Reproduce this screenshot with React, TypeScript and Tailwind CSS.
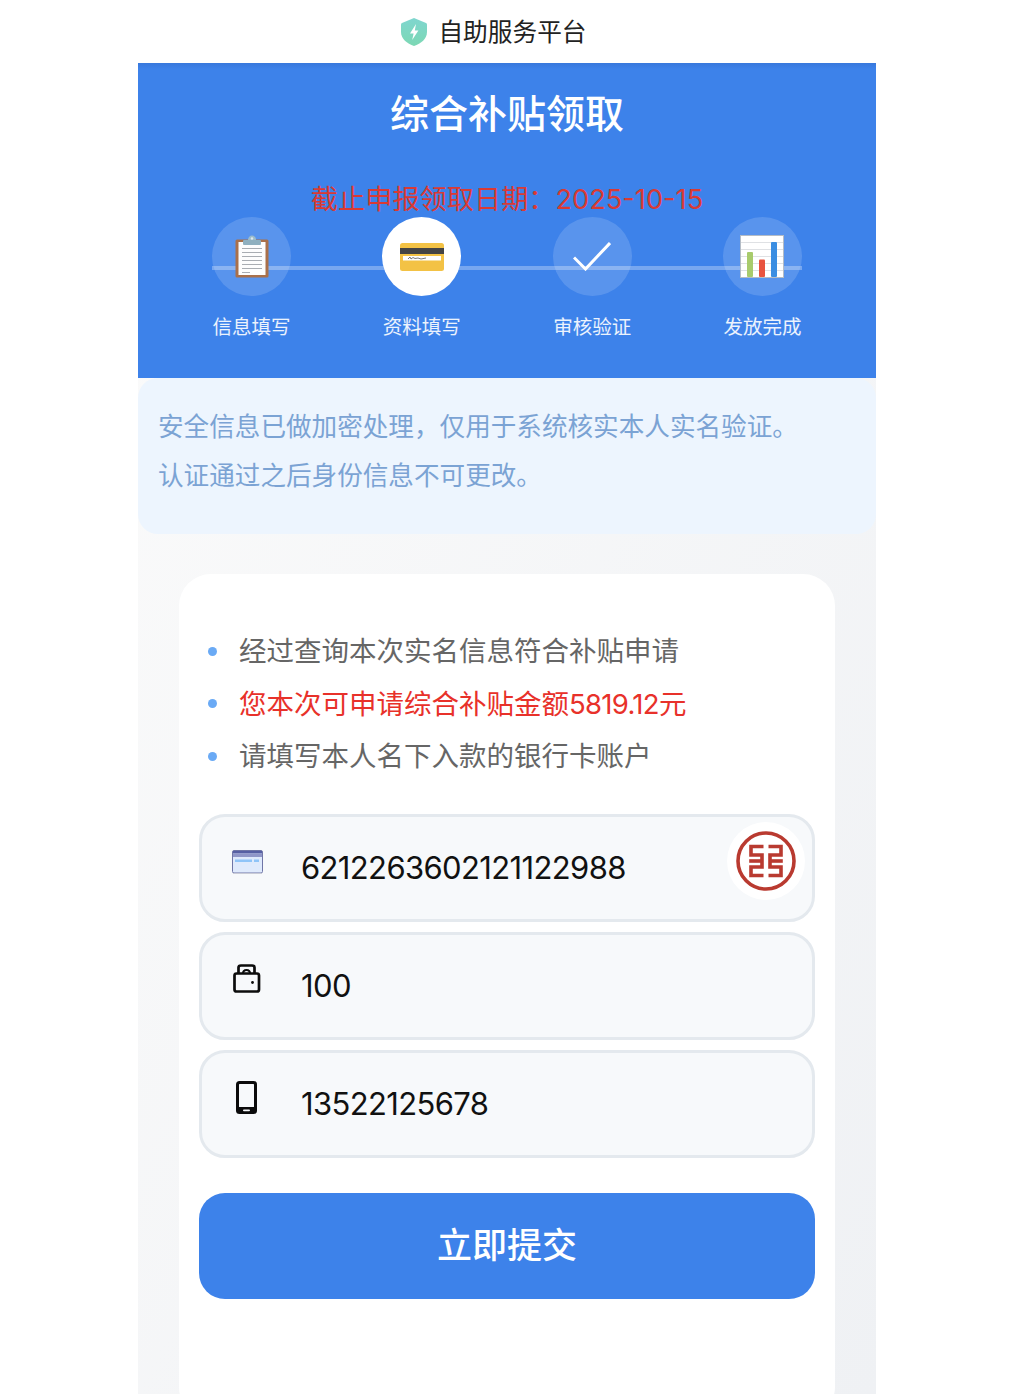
const cjk = { fontFamily: '"Inter","Noto Sans CJK SC",sans-serif' };

function Shield() {
  return (
    <svg width="26" height="28" viewBox="0 0 26 28">
      <defs>
        <linearGradient id="sg" x1="0" y1="0" x2="0" y2="1">
          <stop offset="0" stopColor="#7fd6cf" />
          <stop offset="1" stopColor="#7cd8b4" />
        </linearGradient>
      </defs>
      <path d="M13 0 L25 5 C25.6 5.3 26 6 26 7 V14 C26 21 20 25.5 13 28 C6 25.5 0 21 0 14 V7 C0 6 .4 5.3 1 5 Z" fill="url(#sg)" />
      <path d="M15 6 L9 15.5 H12.6 L11.2 22 L17.4 12.5 H13.8 Z" fill="#fff" />
    </svg>
  );
}

function Clipboard() {
  return (
    <svg width="34" height="43" viewBox="0 0 34 43">
      <rect x="0.5" y="4.5" width="33" height="38" rx="1.5" fill="#a9704a" />
      <rect x="3.5" y="7" width="27" height="33" fill="#fdfdfd" />
      <rect x="8" y="5" width="18" height="5" rx="1" fill="#8fb0bf" />
      <path d="M13 5 C13 -1 21 -1 21 5 Z" fill="#9cbccb" />
      <circle cx="17" cy="3.5" r="1.2" fill="#e0eaef" />
      <g stroke="#a9adb2" strokeWidth="1">
        <path d="M7 13.5H27" /><path d="M7 17.5H27" /><path d="M7 21.5H27" />
        <path d="M7 25.5H27" /><path d="M7 29.5H27" /><path d="M7 33.5H27" /><path d="M7 37.5H15" />
      </g>
    </svg>
  );
}

function BankCard() {
  return (
    <svg width="44" height="28" viewBox="0 0 44 28">
      <rect x="0" y="0" width="44" height="28" rx="2.5" fill="#f3c245" />
      <rect x="0" y="5" width="44" height="6" fill="#444444" />
      <rect x="3" y="13" width="38" height="4.5" fill="#ffffff" />
      <path d="M8 16 L10 14 L11 16 L13 14.5 L15 15.5 L18 15 L21 16 L26 15" stroke="#444" strokeWidth="0.7" fill="none" />
    </svg>
  );
}

function Check() {
  return (
    <svg width="38" height="29" viewBox="0 0 38 29" fill="none">
      <path d="M1 15.5 L12.5 27 L37 1" stroke="#fff" strokeWidth="3" />
    </svg>
  );
}

function Chart() {
  return (
    <svg width="44" height="43" viewBox="0 0 44 43">
      <rect x="0.5" y="0.5" width="43" height="42" fill="#fff" stroke="#b4bcc6" />
      <g stroke="#dfe1e4" strokeWidth="1">
        <path d="M1 7.5H43" /><path d="M1 14.5H43" /><path d="M1 21.5H43" /><path d="M1 28.5H43" /><path d="M1 35.5H43" />
      </g>
      <rect x="7" y="17" width="6" height="25" rx="1" fill="#a8cb6c" />
      <rect x="19" y="24.5" width="6" height="17.5" rx="1" fill="#e8533f" />
      <rect x="31" y="7" width="6" height="35" rx="1" fill="#3b8ee2" />
    </svg>
  );
}

function CardIcon() {
  return (
    <svg width="31" height="24" viewBox="0 0 31 24">
      <rect x="0.5" y="0.5" width="30" height="22.5" rx="1.5" fill="#dfeafc" stroke="#6f75a6" />
      <rect x="1" y="1" width="29" height="2.5" fill="#565fa3" />
      <rect x="1" y="3.5" width="29" height="3.5" fill="#8f96c8" />
      <rect x="3" y="9.5" width="17" height="2.5" fill="#8fc4f8" />
      <rect x="22" y="9.5" width="5" height="2.5" fill="#8fc4f8" />
      <path d="M1 23.5H30" stroke="#c9cbd6" strokeWidth="1" />
    </svg>
  );
}

function WalletIcon() {
  return (
    <svg width="28" height="29" viewBox="0 0 28 29" fill="none" stroke="#0c0c0c" strokeWidth="2.7">
      <rect x="1.5" y="9.5" width="24.5" height="18" rx="2" />
      <path d="M5.5 9.5 V3.5 Q5.5 1.5 8 1.5 H19 Q21.5 1.5 21.5 3.5 V9.5" />
      <path d="M10 9.5 Q10 6 13.5 6 Q17 6 17 9.5" strokeWidth="2" />
      <circle cx="19.5" cy="18.5" r="1.4" fill="#0c0c0c" stroke="none" />
    </svg>
  );
}

function PhoneIcon() {
  return (
    <svg width="21" height="33" viewBox="0 0 21 33">
      <rect x="0" y="0" width="21" height="33" rx="3.5" fill="#0b0b0b" />
      <rect x="3" y="3" width="15" height="23" rx="0.5" fill="#f7f9fb" />
      <rect x="7" y="28.4" width="7" height="1.8" rx="0.9" fill="#f7f9fb" />
    </svg>
  );
}

function Icbc() {
  return (
    <svg width="60" height="60" viewBox="0 0 60 60" fill="none">
      <circle cx="30" cy="30" r="28" stroke="#b93a30" strokeWidth="3.6" />
      <g stroke="#b93a30" strokeWidth="3.6">
        <path d="M27.5 15.5 H15 V24 H26 V36 H15 V44.5 H27.5" />
        <path d="M13.2 30 H26" />
        <path d="M32.5 15.5 H45 V24 H34 V36 H45 V44.5 H32.5" />
        <path d="M46.8 30 H34" />
      </g>
    </svg>
  );
}

const steps = [
  { label: '信息填写', icon: <Clipboard />, active: false },
  { label: '资料填写', icon: <BankCard />, active: true },
  { label: '审核验证', icon: <Check />, active: false },
  { label: '发放完成', icon: <Chart />, active: false },
];

const fields = [
  { value: '6212263602121122988', icon: <CardIcon />, cls: 'w-[31px] mb-[12px]', bank: true },
  { value: '100', icon: <WalletIcon />, cls: 'w-[28px] ml-[1px] mb-[14px]', bank: false },
  { value: '13522125678', icon: <PhoneIcon />, cls: 'w-[21px] ml-[4px] mb-[12px]', bank: false },
];

export default function App() {
  return (
    <div className="h-[1394px] overflow-hidden bg-white" style={cjk}>
      <header className="h-[63px] flex items-center justify-center gap-[11px] pr-[26px]">
        <Shield />
        <span className="text-[24.7px] leading-[32px] text-[#222]">自助服务平台</span>
      </header>
      <main className="w-[738px] ml-[138px] h-[1331px] overflow-hidden bg-gradient-to-br from-[#fbfbfb] to-[#eff1f4]">
        <section className="relative h-[315px] bg-[linear-gradient(#3878dc,#3d82ea_6px)] pt-[27px]">
          <h1 className="text-center text-[39px] leading-[48px] font-medium text-white">综合补贴领取</h1>
          <p className="mt-[48px] text-center text-[27.2px] leading-[28px] text-[#d93a34]">截止申报领取日期：2025-10-15</p>
          <div className="relative mt-[3px] mx-[74px] flex justify-between">
            <div className="absolute left-0 right-0 top-[49px] h-[4px] bg-white/30" />
            {steps.map((s) => (
              <div key={s.label} className="w-[79px] flex flex-col items-center">
                <div className={`relative h-[79px] w-[79px] rounded-full flex items-center justify-center ${s.active ? 'bg-white' : 'bg-white/15'}`}>
                  {s.icon}
                </div>
                <span className="mt-[17px] text-[19.5px] leading-[28px] whitespace-nowrap text-white/90">{s.label}</span>
              </div>
            ))}
          </div>
        </section>
        <section className="h-[156px] rounded-[20px] bg-[#edf5fe] px-[20px] pt-[24px] text-[25.6px] leading-[49px] text-[#7ba3d4]">
          <p>安全信息已做加密处理，仅用于系统核实本人实名验证。</p>
          <p>认证通过之后身份信息不可更改。</p>
        </section>
        <section className="mx-[41px] mt-[40px] rounded-[32px] bg-white px-[20px] pt-[51px] pb-[120px]">
          <ul className="text-[27.5px] leading-[52.5px] text-[#666]">
            <li className="flex items-center gap-[22px] pl-[9px]">
              <span className="h-[9px] w-[9px] rounded-full bg-[#6aaaf5]" />经过查询本次实名信息符合补贴申请
            </li>
            <li className="flex items-center gap-[22px] pl-[9px] text-[#e8312a]">
              <span className="h-[9px] w-[9px] rounded-full bg-[#6aaaf5]" />
              <span>您本次可申请综合补贴金额<span className="tracking-[-0.7px]">5819.12</span>元</span>
            </li>
            <li className="flex items-center gap-[22px] pl-[9px]">
              <span className="h-[9px] w-[9px] rounded-full bg-[#6aaaf5]" />请填写本人名下入款的银行卡账户
            </li>
          </ul>
          <div className="mt-[31px] flex flex-col gap-[10px]">
            {fields.map((f) => (
              <div key={f.value} className="relative h-[108px] rounded-[26px] border-[3px] border-[#e4e9ee] bg-[#f7f9fb] flex items-center pl-[30px]">
                <div className={`${f.cls} shrink-0 flex`}>{f.icon}</div>
                <span className="absolute left-[99px] top-[31px] text-[31px] leading-[40px] tracking-[-0.63px] text-[#111]">{f.value}</span>
                {f.bank && (
                  <div className="absolute right-[7px] top-[5px] h-[78px] w-[78px] rounded-full bg-white flex items-center justify-center">
                    <Icbc />
                  </div>
                )}
              </div>
            ))}
          </div>
          <button className="mt-[35px] h-[106px] w-full rounded-[26px] bg-[#3d82ea] text-[35px] font-medium text-white">立即提交</button>
        </section>
      </main>
    </div>
  );
}
